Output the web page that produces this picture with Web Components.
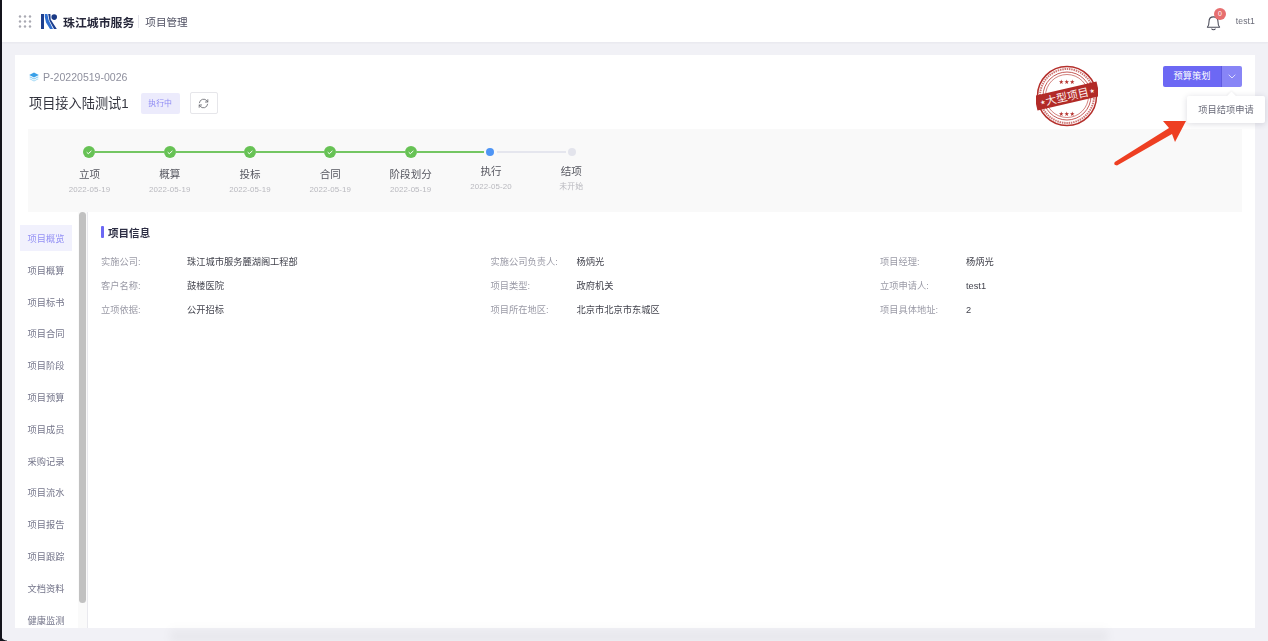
<!DOCTYPE html>
<html lang="zh">
<head>
<meta charset="utf-8">
<title>项目管理</title>
<style>
    html, body { margin: 0; height: 100%; }
    body {
        width: 1268px;
        height: 641px;
        overflow: hidden;
        background: #f1f1f6;
        font-family: "Liberation Sans", "Noto Sans CJK SC", sans-serif;
    }
</style>
</head>
<body>
<app-shell>
    <top-bar slot="top"></top-bar>
    <project-card>
        <project-head slot="head"></project-head>
        <step-flow slot="steps"></step-flow>
        <side-nav slot="nav"></side-nav>
        <info-panel slot="main"></info-panel>
    </project-card>
</app-shell>

<script>
/**
 * Page frame: top bar, content area and the black window edge of the capture
 */
class AppShell extends HTMLElement {
    constructor() {
        super();
        this.attachShadow({ mode: 'open' });
    }

    connectedCallback() {
        this.shadowRoot.innerHTML = `
            <style>
                :host {
                    display: flex;
                    flex-direction: column;
                    position: relative;
                    width: 1268px;
                    height: 641px;
                    overflow: hidden;
                }
                .page {
                    display: flex;
                    flex-direction: column;
                    height: 100%;
                    /* the reference is a soft, rescaled capture */
                    filter: blur(.35px);
                }
                .edge {
                    position: absolute;
                    left: 0;
                    top: 0;
                    bottom: 0;
                    width: 2px;
                    background: #14141c;
                }
                .corner {
                    position: absolute;
                    left: 0;
                    bottom: 0;
                    width: 7px;
                    height: 7px;
                    background: radial-gradient(circle at 100% 0, transparent 6px, #14141c 7px);
                }
                .shade {
                    position: absolute;
                    left: 170px;
                    right: 160px;
                    bottom: 0;
                    height: 16px;
                    background: linear-gradient(rgba(0,0,0,0), rgba(0,0,0,.055));
                    filter: blur(4px);
                    pointer-events: none;
                }
            </style>
            <div class="page">
                <slot name="top"></slot>
                <slot></slot>
            </div>
            <div class="shade"></div>
            <div class="edge"></div>
            <div class="corner"></div>
        `;
    }
}

class TopBar extends HTMLElement {
    constructor() {
        super();
        this.attachShadow({ mode: 'open' });
    }

    connectedCallback() {
        this.shadowRoot.innerHTML = `
            <style>
                :host {
                    display: flex;
                    align-items: center;
                    flex: none;
                    height: 42px;
                    padding: 0 13px 0 18px;
                    background: #fff;
                    box-shadow: 0 1px 2px rgba(30,30,60,.05);
                    color: #3a3b4c;
                }
                .apps { display: block; margin-right: 9px; }
                .logo { display: block; margin-right: 6px; }
                .brand { font-size: 11.9px; font-weight: 700; color: #26273a; }
                .sep { width: 1px; height: 13px; background: #e4e4ea; margin: 0 6px 0 4px; }
                .module { font-size: 10.56px; color: #4d4e60; }
                .right { margin-left: auto; display: flex; align-items: center; }
                .bell { position: relative; width: 15px; height: 17px; margin: 3px 15px 0 0; }
                .bell svg { display: block; }
                .badge {
                    position: absolute;
                    left: 8px;
                    top: -6px;
                    width: 12px;
                    height: 12px;
                    border-radius: 50%;
                    background: #e76f70;
                    color: #fff;
                    font-size: 7px;
                    line-height: 12px;
                    text-align: center;
                }
                .user { font-size: 8.6px; color: #6a6b78; letter-spacing: .1px; }
            </style>
            <svg class="apps" width="14" height="13" viewBox="0 0 14 13" fill="#a9a9b2">
                <circle cx="2" cy="1.5" r="1.2"/><circle cx="7" cy="1.5" r="1.2"/><circle cx="12" cy="1.5" r="1.2"/>
                <circle cx="2" cy="6.5" r="1.2"/><circle cx="7" cy="6.5" r="1.2"/><circle cx="12" cy="6.5" r="1.2"/>
                <circle cx="2" cy="11.5" r="1.2"/><circle cx="7" cy="11.5" r="1.2"/><circle cx="12" cy="11.5" r="1.2"/>
            </svg>
            <svg class="logo" width="16" height="15" viewBox="0 0 16 15">
                <rect x="0" y="0" width="3" height="15" fill="#1d3f8f"/>
                <path d="M3.800 0H6.400L7.600 6 12 15H9L5 8.500 3.800 3Z" fill="#2f6fd0"/>
                <path d="M7.200 0H9.400L9.700 5.500 15.800 15H13L8.400 6.500Z" fill="#1d3f8f"/>
                <circle cx="13.200" cy="3.100" r="2.800" fill="#1a3a86"/>
            </svg>
            <span class="brand">珠江城市服务</span>
            <span class="sep"></span>
            <span class="module">项目管理</span>
            <div class="right">
                <div class="bell">
                    <svg width="15" height="17" viewBox="0 0 16 18" fill="none" stroke="#4a4b58" stroke-width="1.15" stroke-linejoin="round" stroke-linecap="round">
                        <path d="M1.500 14C3.200 12.500 3.200 10.500 3.200 8.200 3.200 5 5 3 8 3s4.800 2 4.800 5.200c0 2.300 0 4.300 1.700 5.800Z"/>
                        <path d="M6.200 16C6.800 16.900 9.200 16.900 9.800 16"/>
                    </svg>
                    <span class="badge">0</span>
                </div>
                <span class="user">test1</span>
            </div>
        `;
    }
}

class ProjectCard extends HTMLElement {
    constructor() {
        super();
        this.attachShadow({ mode: 'open' });
    }

    connectedCallback() {
        this.shadowRoot.innerHTML = `
            <style>
                :host {
                    display: flex;
                    flex-direction: column;
                    flex: none;
                    height: 573px;
                    margin: 13px 13px 0 15px;
                    background: #fff;
                }
                .steps { padding: 0 13px; }
                .lower { display: flex; flex: 1; min-height: 0; overflow: hidden; }
                .lower ::slotted(info-panel) { flex: 1; }
            </style>
            <slot name="head"></slot>
            <div class="steps"><slot name="steps"></slot></div>
            <div class="lower">
                <slot name="nav"></slot>
                <slot name="main"></slot>
            </div>
        `;
    }
}

class ProjectHead extends HTMLElement {
    constructor() {
        super();
        this.attachShadow({ mode: 'open' });
    }

    connectedCallback() {
        this.shadowRoot.innerHTML = `
            <style>
                :host {
                    display: block;
                    position: relative;
                    height: 74px;
                    padding: 15px 13px 0 14px;
                    box-sizing: border-box;
                }
                .code {
                    display: flex;
                    align-items: center;
                    gap: 4px;
                    height: 14px;
                    font-size: 10.56px;
                    color: #8f909e;
                }
                .title-row {
                    display: flex;
                    align-items: center;
                    height: 22px;
                    margin-top: 8px;
                }
                h1 {
                    margin: -1px 0 0;
                    font-size: 13.2px;
                    font-weight: 400;
                    color: #34353f;
                }
                .tag {
                    margin-left: 12px;
                    width: 39px;
                    height: 21px;
                    border-radius: 2px;
                    background: #ecebfc;
                    color: #8d89f4;
                    font-size: 7.92px;
                    line-height: 21px;
                    text-align: center;
                }
                .refresh {
                    display: flex;
                    align-items: center;
                    justify-content: center;
                    width: 28px;
                    height: 22px;
                    margin-left: 10px;
                    box-sizing: border-box;
                    border: 1px solid #e6e6ea;
                    border-radius: 2px;
                }
                .actions {
                    position: absolute;
                    right: 13px;
                    top: 11px;
                    display: flex;
                    height: 21px;
                    border-radius: 2px;
                    overflow: hidden;
                }
                .primary {
                    width: 58px;
                    background: #6c68f4;
                    color: #fff;
                    font-size: 9.24px;
                    line-height: 21px;
                    text-align: center;
                }
                .more {
                    display: flex;
                    align-items: center;
                    justify-content: center;
                    width: 21px;
                    background: #8885f6;
                    border-left: 1px solid #5f5be0;
                    box-sizing: border-box;
                }
                .menu {
                    position: absolute;
                    left: 1172px;
                    top: 41px;
                    width: 78px;
                    height: 27px;
                    background: #fff;
                    border-radius: 2px;
                    box-shadow: 0 1px 6px rgba(30,30,60,.16);
                    color: #696a78;
                    font-size: 9.24px;
                    line-height: 28px;
                    text-align: center;
                    z-index: 3;
                }
                .menu::before {
                    content: "";
                    position: absolute;
                    right: 30px;
                    top: -3px;
                    width: 7px;
                    height: 7px;
                    background: #fff;
                    transform: rotate(45deg);
                    box-shadow: -1px -1px 2px rgba(30,30,60,.05);
                }
                .stamp { position: absolute; left: 1021px; top: 10px; z-index: 2; }
                .arrow { position: absolute; left: 1095px; top: 60px; z-index: 4; }
            </style>
            <div class="code">
                <svg width="10" height="10" viewBox="0 0 10 10">
                    <path d="M5 .5 9.800 3 5 5.500 .2 3Z" fill="#3aa0e8"/>
                    <path d="M1.100 4.400 5 6.400 8.900 4.400 9.800 5 5 7.500 .2 5Z" fill="#7cc6f2"/>
                    <path d="M1.100 6.400 5 8.400 8.900 6.400 9.800 7 5 9.500 .2 7Z" fill="#a5daf6"/>
                </svg>
                <span>P-20220519-0026</span>
            </div>
            <div class="title-row">
                <h1>项目接入陆测试1</h1>
                <span class="tag">执行中</span>
                <span class="refresh">
                    <svg width="11" height="11" viewBox="0 0 12 12" fill="none" stroke="#66676f" stroke-width=".9" stroke-linecap="round" stroke-linejoin="round">
                        <path d="M1.500 5.200A4.600 4.600 0 0 1 9.700 3.100L10.500 4.200"/>
                        <path d="M10.700 1.800V4.400H8.100"/>
                        <path d="M10.500 6.800A4.600 4.600 0 0 1 2.300 8.900L1.500 7.800"/>
                        <path d="M1.300 10.200V7.600H3.900"/>
                    </svg>
                </span>
            </div>
            <svg class="stamp" width="62" height="62" viewBox="0 0 62 62">
                <g fill="none" stroke="#b5302c">
                    <circle cx="31" cy="31" r="29.500" stroke-width="1.500"/>
                    <circle cx="31" cy="31" r="27" stroke-width="2" stroke-dasharray="1.500 .8" opacity=".65"/>
                    <circle cx="31" cy="31" r="24" stroke-width=".8"/>
                    <circle cx="31" cy="31" r="21.500" stroke-width="1" opacity=".6"/>
                </g>
                <text x="31" y="17.500" text-anchor="middle" font-size="5" letter-spacing=".5" fill="#b5302c">★★★</text>
                <text x="31" y="50" text-anchor="middle" font-size="5" letter-spacing=".5" fill="#b5302c">★★★</text>
                <g transform="rotate(-13 31 31)">
                    <rect x="-1" y="23.500" width="64" height="15" fill="#b22a27"/>
                    <text x="31" y="35.500" text-anchor="middle" font-size="11" font-family="'Liberation Serif','Noto Sans CJK SC',serif" fill="#fbeeee">大型项目</text>
                    <text x="3.500" y="33.500" font-size="5" fill="#fbeeee">★</text>
                    <text x="54" y="33.500" font-size="5" fill="#fbeeee">★</text>
                </g>
            </svg>
            <div class="actions">
                <span class="primary">预算策划</span>
                <span class="more">
                    <svg width="8" height="5" viewBox="0 0 8 5" fill="none" stroke="#e6e6fd" stroke-width=".9"><path d="M.7 .7 4 4 7.300 .7"/></svg>
                </span>
            </div>
            <div class="menu">项目结项申请</div>
            <svg class="arrow" width="80" height="56" viewBox="0 0 80 56">
                <path d="M4.800 47 59 13 53 6H76L65 27 62 19 7 50.500Q3 50 4.800 47Z" fill="#ee3f22"/>
            </svg>
        `;
    }
}

/**
 * One stage of the project flow. state: done | active | todo
 */
class FlowStep extends HTMLElement {
    constructor() {
        super();
        this.attachShadow({ mode: 'open' });
    }

    connectedCallback() {
        const label = this.getAttribute('label') || '';
        const date = this.getAttribute('date') || '';
        const state = this.getAttribute('state') || 'done';
        const first = this.hasAttribute('first');
        const last = this.hasAttribute('last');
        const next = this.getAttribute('next') || 'done';

        const tick = state === 'done'
            ? `<svg width="12" height="12" viewBox="0 0 12 12"><circle cx="6" cy="6" r="6" fill="#67c255"/><path d="M3.700 6.200 5.300 7.700 8.400 4.900" fill="none" stroke="#fff" stroke-width="1"/></svg>`
            : `<span class="dot"></span>`;

        this.shadowRoot.innerHTML = `
            <style>
                :host {
                    display: block;
                    width: 80.3px;
                    flex: none;
                    text-align: center;
                }
                .rail { display: flex; align-items: center; height: 12px; }
                .line { flex: 1; height: 1.2px; }
                .line.done { background: #74c663; }
                .line.todo { background: #e5e6ee; }
                .line.none { background: transparent; }
                .line.gap-r { margin-right: 2px; }
                .line.gap-l { margin-left: 3px; }
                svg { display: block; flex: none; }
                .dot { flex: none; width: 8px; height: 8px; border-radius: 50%; }
                .active .dot { background: #4f95f5; }
                .todo .dot { background: #e3e4ec; }
                .label { margin-top: 8px; font-size: 10.56px; line-height: 16px; color: #55565f; }
                .date { margin-top: 1px; font-size: 7.92px; line-height: 14px; color: #b9b9bf; letter-spacing: .1px; }
                .active .label, .todo .label { margin-top: 5px; }
            </style>
            <div class="${state}">
                <div class="rail">
                    <span class="line ${first ? 'none' : (state === 'todo' ? 'todo gap-r' : 'done')} ${state === 'active' ? 'gap-r' : ''}"></span>
                    ${tick}
                    <span class="line ${last ? 'none' : next} ${state === 'active' ? 'gap-l' : ''}"></span>
                </div>
                <div class="label">${label}</div>
                <div class="date">${date}</div>
            </div>
        `;
    }
}

class StepFlow extends HTMLElement {
    constructor() {
        super();
        this.attachShadow({ mode: 'open' });
    }

    connectedCallback() {
        const steps = [
            ['立项', '2022-05-19', 'done'],
            ['概算', '2022-05-19', 'done'],
            ['投标', '2022-05-19', 'done'],
            ['合同', '2022-05-19', 'done'],
            ['阶段划分', '2022-05-19', 'done'],
            ['执行', '2022-05-20', 'active'],
            ['结项', '未开始', 'todo']
        ];

        this.shadowRoot.innerHTML = `
            <style>
                :host {
                    display: flex;
                    height: 83px;
                    padding: 17px 0 0 21.3px;
                    box-sizing: border-box;
                    background: #f9f9f9;
                }
            </style>
            ${steps.map((s, i) => {
                const following = steps[i + 1];
                const next = following && following[2] === 'todo' ? 'todo' : 'done';
                return `<flow-step label="${s[0]}" date="${s[1]}" state="${s[2]}" next="${next}"${i === 0 ? ' first' : ''}${i === steps.length - 1 ? ' last' : ''}></flow-step>`;
            }).join('')}
        `;
    }
}

class SideNav extends HTMLElement {
    constructor() {
        super();
        this.attachShadow({ mode: 'open' });
    }

    connectedCallback() {
        const items = ['项目概览', '项目概算', '项目标书', '项目合同', '项目阶段', '项目预算', '项目成员', '采购记录', '项目流水', '项目报告', '项目跟踪', '文档资料', '健康监测'];

        this.shadowRoot.innerHTML = `
            <style>
                :host {
                    display: flex;
                    flex: none;
                    width: 73px;
                    height: 100%;
                    box-sizing: border-box;
                    border-right: 1px solid #e9e9ee;
                    overflow: hidden;
                }
                ul {
                    list-style: none;
                    width: 57px;
                    margin: 0;
                    padding: 13px 0 0 5px;
                    flex: none;
                    box-sizing: border-box;
                }
                li {
                    height: 26px;
                    margin-bottom: 5.8px;
                    font-size: 9.24px;
                    line-height: 28px;
                    text-align: center;
                    color: #74758a;
                }
                li.on { background: #f1f1fd; color: #9592f5; }
                .track {
                    flex: none;
                    width: 15px;
                    padding: 0 4px 0 7px;
                    box-sizing: border-box;
                    background: linear-gradient(90deg, #fff 6px, #fafafa 6px);
                }
                .thumb {
                    width: 7px;
                    height: 391px;
                    margin-left: -.5px;
                    border-radius: 3.5px;
                    background: #c1c1c1;
                }
            </style>
            <ul>
                ${items.map((t, i) => `<li class="${i === 0 ? 'on' : ''}">${t}</li>`).join('')}
            </ul>
            <div class="track"><div class="thumb"></div></div>
        `;
    }
}

class InfoPanel extends HTMLElement {
    constructor() {
        super();
        this.attachShadow({ mode: 'open' });
    }

    connectedCallback() {
        const rows = [
            ['实施公司:', '珠江城市服务麓湖阁工程部'], ['实施公司负责人:', '杨炳光'], ['项目经理:', '杨炳光'],
            ['客户名称:', '鼓楼医院'], ['项目类型:', '政府机关'], ['立项申请人:', 'test1'],
            ['立项依据:', '公开招标'], ['项目所在地区:', '北京市北京市东城区'], ['项目具体地址:', '2']
        ];

        this.shadowRoot.innerHTML = `
            <style>
                :host {
                    display: block;
                    padding: 14px 0 0 13px;
                    box-sizing: border-box;
                }
                h2 {
                    display: flex;
                    align-items: center;
                    gap: 4px;
                    height: 12px;
                    margin: 0 0 12px;
                    font-size: 10.56px;
                    font-weight: 700;
                    color: #2d2e44;
                }
                h2::before {
                    content: "";
                    width: 3px;
                    height: 12px;
                    border-radius: 1px;
                    background: #6c68f4;
                }
                .grid {
                    display: grid;
                    grid-template-columns: repeat(3, 389.5px);
                    grid-auto-rows: 24px;
                    font-size: 9.24px;
                    line-height: 24px;
                }
                .cell { display: flex; }
                .k { width: 86px; flex: none; color: #9a9aa6; }
                .v { color: #43444e; }
            </style>
            <h2>项目信息</h2>
            <div class="grid">
                ${rows.map(r => `<div class="cell"><span class="k">${r[0]}</span><span class="v">${r[1]}</span></div>`).join('')}
            </div>
        `;
    }
}

customElements.define('app-shell', AppShell);
customElements.define('top-bar', TopBar);
customElements.define('project-card', ProjectCard);
customElements.define('project-head', ProjectHead);
customElements.define('flow-step', FlowStep);
customElements.define('step-flow', StepFlow);
customElements.define('side-nav', SideNav);
customElements.define('info-panel', InfoPanel);
</script>
</body>
</html>
